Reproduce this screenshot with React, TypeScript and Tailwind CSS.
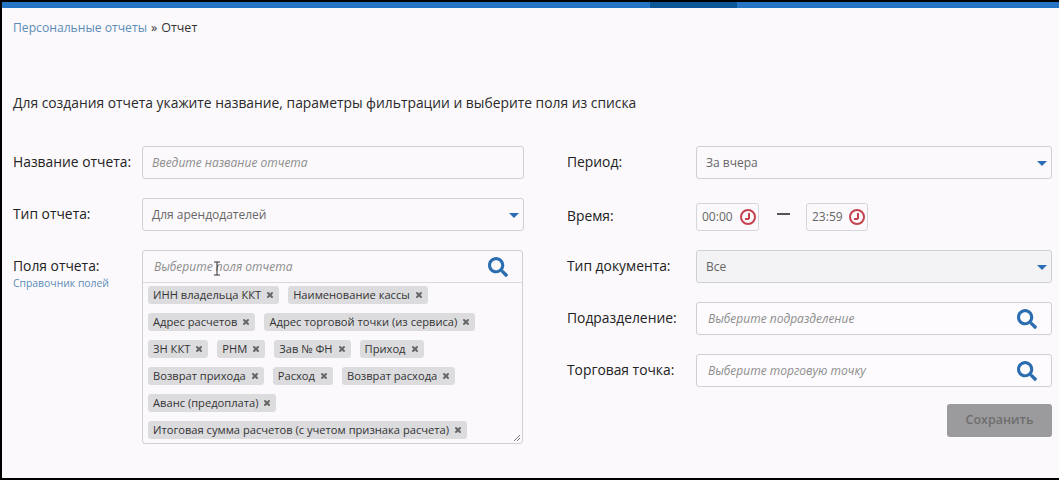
import { X } from "lucide-react";
import { FaSearch } from "react-icons/fa";

const tags = [
  "ИНН владельца ККТ",
  "Наименование кассы",
  "Адрес расчетов",
  "Адрес торговой точки (из сервиса)",
  "ЗН ККТ",
  "РНМ",
  "Зав № ФН",
  "Приход",
  "Возврат прихода",
  "Расход",
  "Возврат расхода",
  "Аванс (предоплата)",
  "Итоговая сумма расчетов (с учетом признака расчета)",
];

function Caret() {
  return <span className="absolute right-[4px] top-[14px] h-0 w-0 border-x-[5px] border-t-[5px] border-x-transparent border-t-[#2a6db5]" />;
}

function SelectBox({ value, disabled }: { value: string; disabled?: boolean }) {
  return (
    <div
      className={`relative flex h-[33px] flex-1 items-center rounded-[3px] border border-[#cfcfd6] pl-[9px] text-[12px] text-[#666] ${
        disabled ? "bg-[#f3f3f5]" : "bg-[#fbf9fc]"
      }`}
    >
      {value}
      <Caret />
    </div>
  );
}

function SearchInput({ placeholder }: { placeholder: string }) {
  return (
    <div className="flex h-[33px] flex-1 items-center justify-between rounded-[3px] border border-[#cfcfd6] bg-[#fdfbfe] pl-[11px] pr-[14px]">
      <span className="text-[12px] italic text-[#8d8d8d]">{placeholder}</span>
      <FaSearch className="h-[20px] w-[20px] text-[#2a6db0]" />
    </div>
  );
}

function TimeInput({ value, width }: { value: string; width: string }) {
  return (
    <div className={`flex h-[28px] items-center justify-between rounded-[3px] border border-[#d5d5db] pl-[5px] pr-[2px] text-[12px] text-[#666] ${width}`}>
      {value}
      <span className="relative h-[16px] w-[16px] rounded-full border-2 border-[#c4434f]">
        <span className="absolute left-[6px] top-[2px] h-[6px] w-[1.5px] bg-[#c4434f]" />
        <span className="absolute left-[3px] top-[7px] h-[1.5px] w-[4px] bg-[#c4434f]" />
      </span>
    </div>
  );
}

export default function App() {
  return (
    <div
      className="h-[480px] w-[1059px] overflow-hidden bg-black pb-[2px] pl-[2px] pt-[2px] text-[#222]"
      style={{ fontFamily: '"Open Sans", sans-serif' }}
    >
      <div className="h-full bg-[#fbf9fc]">
        <div className="flex h-[6px] bg-[#2674c4]">
          <div className="ml-[648px] w-[87px] bg-[#0c5797]" />
        </div>

        <div className="flex items-baseline pl-[11px] pt-[11px] text-[12.5px] leading-[17px] text-[#333]">
          <span className="text-[12.15px] text-[#5b8db8]">Персональные отчеты</span>
          <span className="ml-[4px] mr-[4px]">»</span>
          <span>Отчет</span>
        </div>

        <p className="mt-[57px] pl-[11px] text-[13.85px] leading-[20px] text-[#2a2a2a]">
          Для создания отчета укажите название, параметры фильтрации и выберите поля из списка
        </p>

        <div className="mt-[33px] flex">
          <div className="ml-[11px] w-[511px]">
            <div className="flex items-center">
              <span className="w-[129px] text-[13.85px]">Название отчета:</span>
              <div className="flex h-[33px] flex-1 items-center rounded-[3px] border border-[#cfcfd6] pl-[9px] text-[12px] italic text-[#8d8d8d]">
                Введите название отчета
              </div>
            </div>
            <div className="mt-[19px] flex items-center">
              <span className="w-[129px] text-[13.85px]">Тип отчета:</span>
              <SelectBox value="Для арендодателей" />
            </div>
            <div className="mt-[19px] flex">
              <div className="w-[129px] pt-[6px]">
                <div className="text-[13.85px] leading-[20px]">Поля отчета:</div>
                <div className="text-[10.4px] leading-[15px] text-[#5b8db8]">Справочник полей</div>
              </div>
              <div className="relative h-[194px] w-[381px] rounded-[3px] border border-[#cfcfd6]">
                <div className="flex h-[32px] items-center justify-between border-b border-[#d8d8de] pl-[11px] pr-[14px]">
                  <span className="text-[12px] italic text-[#8d8d8d]">Выберите поля отчета</span>
                  <FaSearch className="h-[20px] w-[20px] text-[#2a6db0]" />
                </div>
                <div className="flex flex-wrap gap-x-[9px] gap-y-[9px] pl-[5px] pt-[3px]">
                  {tags.map((tag) => (
                    <span
                      key={tag}
                      className="flex h-[18px] items-center gap-[5px] rounded-[3px] bg-[#dcdcdf] px-[5px] text-[11.15px] text-[#333]"
                    >
                      {tag}
                      <X className="h-[8px] w-[8px] text-[#666]" strokeWidth={6} />
                    </span>
                  ))}
                </div>
                {/* text cursor over the field */}
                <svg className="absolute left-[70px] top-[10px]" width="8" height="15" viewBox="0 0 8 15" fill="none" stroke="#333" strokeWidth="1">
                  <path d="M1 1h6M4 1v13M1 14h6" />
                </svg>
                <svg className="absolute bottom-[1px] right-[1px]" width="8" height="8" viewBox="0 0 8 8" fill="none" stroke="#777" strokeWidth="1">
                  <path d="M1 7l6-6M4 7l3-3" />
                </svg>
              </div>
            </div>
          </div>

          <div className="ml-[43px] w-[485px]">
            <div className="flex items-center">
              <span className="w-[129px] text-[13.85px]">Период:</span>
              <SelectBox value="За вчера" />
            </div>
            <div className="mt-[19px] flex h-[33px] items-end">
              <span className="w-[129px] self-center pt-[3px] text-[13.85px]">Время:</span>
              <TimeInput value="00:00" width="w-[63px]" />
              <span className="mb-[16px] ml-[18px] mr-[16px] h-[2px] w-[13px] bg-[#555]" />
              <TimeInput value="23:59" width="w-[62px]" />
            </div>
            <div className="mt-[19px] flex items-center">
              <span className="w-[129px] text-[13.85px]">Тип документа:</span>
              <SelectBox value="Все" disabled />
            </div>
            <div className="mt-[19px] flex items-center">
              <span className="w-[129px] text-[13.85px]">Подразделение:</span>
              <SearchInput placeholder="Выберите подразделение" />
            </div>
            <div className="mt-[19px] flex items-center">
              <span className="w-[129px] text-[13.85px]">Торговая точка:</span>
              <SearchInput placeholder="Выберите торговую точку" />
            </div>
            <div className="mt-[17px] flex justify-end">
              <button className="h-[33px] w-[105px] rounded-[3px] bg-[#9b9b9d] text-[12.5px] font-semibold text-[#6e6e6e]">
                Сохранить
              </button>
            </div>
          </div>
        </div>
      </div>
    </div>
  );
}
